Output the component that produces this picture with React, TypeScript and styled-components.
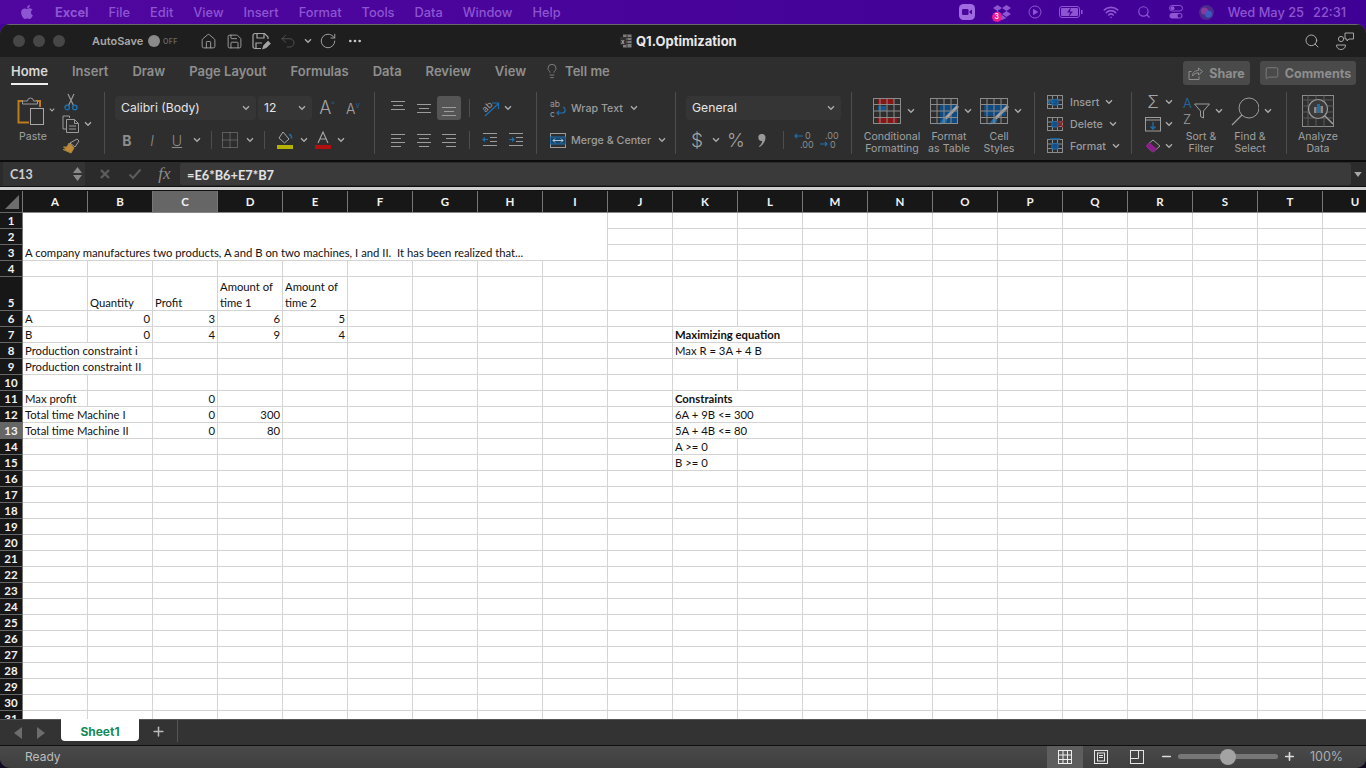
import React from "react"
import styled, { createGlobalStyle } from "styled-components"
import { FaApple } from "react-icons/fa"
import { House, Save, Undo2, RotateCw, Ellipsis, Search, Lightbulb, MessageSquare, Wifi, Plus, Minus } from "lucide-react"

const GlobalStyle = createGlobalStyle`
  html, body { margin: 0; padding: 0; height: 100%; overflow: hidden; }
  body { font-family: Inter, "Liberation Sans", sans-serif; background: #120a22; }
`

const UI_GRAY = "#a2a2a2"
const BLUE = "#1f6fae"

const Screen = styled.div`
  width: 1366px;
  height: 768px;
  display: flex;
  flex-direction: column;
  overflow: hidden;
  background: linear-gradient(#44009a 0, #44009a 50px, #120a22 51px);
`

// mac menu bar
const MenuBar = styled.div`
  height: 24px;
  flex: none;
  display: flex;
  align-items: center;
  padding: 0 20px 0 19px;
  background: linear-gradient(90deg, #50079f, #3f0095);
  color: #8d55d2;
  font-size: 12.8px;
  font-weight: 500;
`

const MenuLeft = styled.div`
  display: flex;
  align-items: center;
  gap: 20px;
`

const AppName = styled.span`
  font-weight: 700;
`

const MenuRight = styled.div`
  display: flex;
  align-items: center;
  margin-left: auto;
`

const TraySlot = styled.div<{ $w: number }>`
  width: ${p => p.$w}px;
  display: flex;
  justify-content: center;
  align-items: center;
  position: relative;
`

const Badge = styled.span`
  position: absolute;
  left: 9px;
  top: 7px;
  width: 10px;
  height: 10px;
  border-radius: 50%;
  background: #ec1a94;
  color: #fff;
  font-size: 7px;
  line-height: 10px;
  text-align: center;
`

const Clock = styled.span`
  margin-left: 7px;
  display: flex;
  gap: 9px;
`

// excel window
const Window = styled.div`
  flex: 1;
  min-height: 0;
  display: flex;
  flex-direction: column;
  border-radius: 10px;
  overflow: hidden;
  background: #2e2e2e;
  box-shadow: inset 0 1px 0 #6a6a6a;
`

const TitleBar = styled.div`
  height: 32px;
  margin-top: 1px;
  flex: none;
  display: flex;
  align-items: center;
  background: #1e1e1e;
  color: ${UI_GRAY};
`

const TitleLeft = styled.div`
  width: 620px;
  padding-left: 13px;
  box-sizing: border-box;
  display: flex;
  align-items: center;
`

const Lights = styled.div`
  display: flex;
  gap: 8px;
  margin-right: 27px;
`

const Light = styled.span`
  width: 12px;
  height: 12px;
  border-radius: 50%;
  background: #474747;
`

const AutoSave = styled.span`
  font-size: 11px;
  font-weight: 600;
  width: 56px;
  color: #a8a8a8;
`

const Toggle = styled.div`
  width: 32px;
  height: 14px;
  margin-right: 15px;
  display: flex;
  align-items: center;
  gap: 3px;
  font-size: 7px;
  font-weight: 600;
  color: #666;
  letter-spacing: 0.4px;
`

const Knob = styled.span`
  width: 12px;
  height: 12px;
  border-radius: 50%;
  background: #8a8a8a;
`

const Slot = styled.div<{ $w: number; $active?: boolean }>`
  width: ${p => p.$w}px;
  height: 24px;
  flex: none;
  display: flex;
  align-items: center;
  justify-content: center;
  border-radius: 3px;
  background: ${p => (p.$active ? "#555" : "transparent")};
`

const DocTitle = styled.div`
  display: flex;
  align-items: center;
  gap: 4px;
  font-size: 13px;
  font-weight: 700;
  color: #e8e8e8;
`

const TitleRight = styled.div`
  margin-left: auto;
  display: flex;
  align-items: center;
  gap: 15px;
  padding-right: 11px;
`

const TabsRow = styled.div`
  height: 28px;
  flex: none;
  display: flex;
  align-items: center;
  padding: 0 10px 0 11px;
  gap: 24px;
  font-size: 13px;
  font-weight: 600;
  color: #8f8f8f;
`

const RibbonTab = styled.div<{ $active?: boolean }>`
  height: 28px;
  line-height: 28px;
  box-sizing: border-box;
  color: ${p => (p.$active ? "#d8d8d8" : "#8f8f8f")};
  box-shadow: ${p => (p.$active ? "inset 0 -2px 0 #eee" : "none")};
`

const TellMe = styled.div`
  display: flex;
  align-items: center;
  gap: 5px;
  margin-left: -6px;
`

const TabActions = styled.div`
  margin-left: auto;
  display: flex;
  gap: 10px;
`

const ActionButton = styled.div<{ $w: number }>`
  width: ${p => p.$w}px;
  height: 24px;
  margin-top: 4px;
  display: flex;
  align-items: center;
  justify-content: center;
  gap: 6px;
  background: #4a4a4a;
  border-radius: 3px;
  color: #8e8e8e;
  font-weight: 700;
  font-size: 12.5px;
`

// ribbon
const Ribbon = styled.div`
  height: 75px;
  flex: none;
  display: flex;
  align-items: center;
`

const Group = styled.div<{ $w?: number; $pl?: number }>`
  width: ${p => (p.$w ? `${p.$w}px` : "auto")};
  flex: none;
  box-sizing: border-box;
  height: 75px;
  padding-left: ${p => p.$pl ?? 0}px;
  display: flex;
`

const Divider = styled.div`
  width: 1px;
  height: 62px;
  flex: none;
  background: #4d4d4d;
`

const Stack = styled.div`
  display: flex;
  flex-direction: column;
  gap: 8px;
  padding-top: 11px;
`

const Row = styled.div`
  height: 24px;
  display: flex;
  align-items: center;
`

const Select = styled.div<{ $w: number }>`
  width: ${p => p.$w}px;
  height: 24px;
  box-sizing: border-box;
  margin-right: 2px;
  padding: 0 6px 1px;
  display: flex;
  align-items: center;
  justify-content: space-between;
  background: #353535;
  border-radius: 3px;
  color: #e4e4e4;
  font-size: 12.2px;
`

const MiniSep = styled.div`
  width: 1px;
  height: 18px;
  background: #4d4d4d;
`

const FontLetter = styled.span<{ $italic?: boolean; $under?: boolean; $bold?: boolean }>`
  font-size: 14px;
  font-weight: ${p => (p.$bold ? 700 : 300)};
  font-style: ${p => (p.$italic ? "italic" : "normal")};
  text-decoration: ${p => (p.$under ? "underline" : "none")};
  color: #8d8d8d;
`

const FxLabel = styled.span`
  font-family: "Liberation Serif", serif;
  font-size: 17px;
  font-style: italic;
  color: #8d8d8d;
`

const SansLetter = styled.span<{ $size: number }>`
  font-size: ${p => p.$size}px;
  font-weight: 300;
  color: #a4a4a4;
  line-height: 1;
`

const GrowCaret = styled.sup`
  font-size: 8px;
  color: ${BLUE};
`

const SmallText = styled.span`
  font-size: 10.7px;
  font-weight: 500;
  color: #9c9c9c;
  white-space: nowrap;
`

const TextRow = styled.div`
  height: 24px;
  display: flex;
  align-items: center;
  gap: 3px;
`

const ChevGap = styled.span`
  margin-left: 4px;
  display: flex;
`

const BigButton = styled.div<{ $w: number; $ml?: number }>`
  width: ${p => p.$w}px;
  margin-left: ${p => p.$ml ?? 0}px;
  flex: none;
  padding-top: 11px;
  display: flex;
  flex-direction: column;
  align-items: center;
`

const BigIcon = styled.div`
  height: 30px;
  display: flex;
  align-items: center;
  gap: 5px;
  margin-bottom: 5px;
`

const PasteGlyph = styled(BigIcon)`
  margin-right: 4px;
`

const TableGlyph = styled(BigIcon)`
  padding-left: 4px;
`

const BigLabel = styled.div`
  font-size: 10.6px;
  line-height: 12px;
  text-align: center;
  color: #a0a0a0;
  white-space: pre;
`

const PasteChev = styled.div`
  width: 6px;
  height: 6px;
  margin-top: 22px;
  display: flex;
  justify-content: center;
`

const ThreeRows = styled.div<{ $ml?: number }>`
  padding-top: 6px;
  margin-left: ${p => p.$ml ?? 0}px;
  display: flex;
  flex-direction: column;
`

const ThinRow = styled.div<{ $gap?: number }>`
  height: 22px;
  display: flex;
  align-items: center;
  gap: ${p => p.$gap ?? 6}px;
`

// formula bar
const FormulaBar = styled.div`
  height: 26px;
  flex: none;
  display: flex;
  align-items: center;
  box-sizing: border-box;
  border-top: 2px solid #0c0c0c;
  padding-left: 3px;
  background: #2b2b2b;
`

const NameBox = styled.div`
  width: 82px;
  height: 24px;
  box-sizing: border-box;
  padding: 0 3px 0 7px;
  display: flex;
  align-items: center;
  justify-content: space-between;
  background: #333;
  color: #cfcfcf;
  font-size: 12.5px;
  font-family: Lato, sans-serif;
  font-weight: 700;
`

const Steppers = styled.div`
  display: flex;
  flex-direction: column;
  gap: 2px;
`

const FormulaTools = styled.div`
  width: 95px;
  display: flex;
  align-items: center;
  padding-left: 5px;
  box-sizing: border-box;
`

const FormulaInput = styled.div`
  width: 1171px;
  height: 22px;
  box-sizing: border-box;
  padding: 1px 0 0 7px;
  display: flex;
  align-items: center;
  background: #3a3a3a;
  border-radius: 2px;
  color: #e2e2e2;
  font-size: 12.8px;
  font-weight: 700;
  font-family: Lato, sans-serif;
`

const Expand = styled.div`
  margin-left: 3px;
  display: flex;
`

const GridTopEdge = styled.div`
  height: 5px;
  flex: none;
  box-sizing: border-box;
  border-top: 1px solid #111;
  border-bottom: 1px solid #111;
  background: #cfcfcf;
`

// sheet
const Sheet = styled.div`
  flex: 1;
  min-height: 0;
  overflow: hidden;
  background: #fff;
  font-family: Lato, "Liberation Sans", sans-serif;
  font-size: 11.3px;
  color: #111;
`

const SheetRow = styled.div<{ $h: number }>`
  display: flex;
  height: ${p => p.$h}px;
`

const RowHead = styled.div<{ $selected?: boolean }>`
  width: 23px;
  flex: none;
  box-sizing: border-box;
  display: flex;
  align-items: flex-end;
  justify-content: center;
  padding-bottom: 1px;
  background: ${p => (p.$selected ? "#666" : "#171717")};
  border-right: 1px solid #777;
  border-bottom: 1px solid #666;
  color: #f2f2f2;
  font-size: 11.5px;
  font-weight: 700;
`

const Corner = styled(RowHead)`
  align-items: center;
  padding: 0;
`

const ColHead = styled.div<{ $selected?: boolean }>`
  width: 65px;
  flex: none;
  box-sizing: border-box;
  display: flex;
  align-items: center;
  justify-content: center;
  background: ${p => (p.$selected ? "#666" : "#171717")};
  border-right: 1px solid #777;
  border-bottom: 1px solid #888;
  color: #f2f2f2;
  font-size: 11.5px;
  font-weight: 700;
`

const Cell = styled.div<{ $span: number; $right?: boolean; $bold?: boolean; $open?: boolean }>`
  width: ${p => p.$span * 65}px;
  flex: none;
  box-sizing: border-box;
  padding: 0 2px;
  display: flex;
  align-items: flex-end;
  justify-content: ${p => (p.$right ? "flex-end" : "flex-start")};
  border-right: 1px solid #d4d4d4;
  border-bottom: ${p => (p.$open ? "none" : "1px solid #d4d4d4")};
  font-weight: ${p => (p.$bold ? 700 : 400)};
  line-height: 16px;
  white-space: pre;
`

const CellText = styled.span`
  margin-bottom: -1px;
`

// tabs and status
const TabBar = styled.div`
  height: 27px;
  flex: none;
  box-sizing: border-box;
  display: flex;
  background: #333;
  border-top: 1px solid #555;
  border-bottom: 1px solid #0f0f0f;
`

const TabArrows = styled.div`
  width: 61px;
  padding-left: 14px;
  box-sizing: border-box;
  display: flex;
  align-items: center;
  gap: 15px;
`

const SheetTab = styled.div`
  width: 78px;
  height: 22px;
  margin-top: -1px;
  padding-top: 2px;
  box-sizing: border-box;
  display: flex;
  align-items: center;
  justify-content: center;
  background: #fff;
  border-radius: 0 0 4px 4px;
  color: #148a58;
  font-size: 12px;
  font-weight: 700;
`

const AddTab = styled.div`
  width: 39px;
  height: 22px;
  box-sizing: border-box;
  display: flex;
  align-items: center;
  justify-content: center;
  border-right: 1px solid #555;
  color: #bbb;
`

const StatusBar = styled.div`
  height: 22px;
  box-sizing: border-box;
  flex: none;
  display: flex;
  align-items: center;
  padding: 0 0 1px 25px;
  background: linear-gradient(#4a4a4a, #3f3f3f);
  color: #bcbcbc;
  font-size: 12px;
`

const StatusRight = styled.div`
  margin-left: auto;
  display: flex;
  align-items: center;
`

const ViewButton = styled.div<{ $active?: boolean }>`
  width: 36px;
  height: 22px;
  display: flex;
  align-items: center;
  justify-content: center;
  background: ${p => (p.$active ? "#5e5e5e" : "transparent")};
`

const ZoomTrack = styled.div`
  width: 100px;
  height: 5px;
  margin-right: 3px;
  display: flex;
  align-items: center;
  justify-content: center;
  background: #777;
  border-radius: 3px;
`

const ZoomThumb = styled.span`
  width: 16px;
  height: 16px;
  flex: none;
  border-radius: 50%;
  background: #a3a3a3;
`

const ZoomValue = styled.span`
  width: 56px;
  margin-left: 13px;
  font-size: 12.5px;
  color: #adadad;
`

// icons
const Chev = ({ color = "#a8a8a8" }: { color?: string }) => (
  <svg width="8" height="6" viewBox="0 0 8 6" fill="none">
    <path d="M1 1.2 4 4.3 7 1.2" stroke={color} strokeWidth="1.4" />
  </svg>
)

const Lines = ({ ys, xs }: { ys: number[]; xs: [number, number][] }) => (
  <svg width="16" height="16" viewBox="0 0 16 16" stroke="#9c9c9c" strokeWidth="1">
    {ys.map((y, i) => (
      <line key={i} x1={xs[i][0]} x2={xs[i][1]} y1={y + 0.5} y2={y + 0.5} />
    ))}
  </svg>
)

const wide: [number, number][] = [[1, 15], [3, 13], [1, 15]]

const PasteIcon = () => (
  <svg width="28" height="30" viewBox="0 0 28 30" fill="none">
    <path d="M6 5H1.5V26.5H12" stroke="#bd7d1c" strokeWidth="2" />
    <path d="M19 5h4v6" stroke="#bd7d1c" strokeWidth="2" />
    <path d="M5.5 8V5h5a3 3 0 0 1 6 0h4v3z" fill="#2e2e2e" stroke="#999" />
    <rect x="13.5" y="12.5" width="13" height="16" stroke="#a8a8a8" />
  </svg>
)

const ScissorsIcon = () => (
  <svg width="14" height="18" viewBox="0 0 14 18" fill="none">
    <path d="M4 1 9.5 12.5M10 1 4.5 12.5" stroke="#9a9a9a" strokeWidth="1.2" />
    <circle cx="3.2" cy="14.5" r="2.2" stroke={BLUE} strokeWidth="1.4" />
    <circle cx="10.8" cy="14.5" r="2.2" stroke={BLUE} strokeWidth="1.4" />
  </svg>
)

const CopyIcon = () => (
  <svg width="18" height="18" viewBox="0 0 18 18" fill="none" stroke="#9a9a9a">
    <path d="M7.5 3V1H1v13h3" />
    <path d="M4.5 4.5h8l4 4v9h-12zM12.5 4.5v4h4M7 11h7M7 14h7" />
  </svg>
)

const BrushIcon = () => (
  <svg width="18" height="16" viewBox="0 0 18 16" fill="none">
    <path d="M7 5 12 10 9 15 1 11.5 4 11 1.5 9 5 9z" fill="#c08a35" stroke="#a8823f" />
    <path d="M8 5 15 1l2 2-4 6z" stroke="#a0a0a0" />
  </svg>
)

const BordersIcon = () => (
  <svg width="16" height="16" viewBox="0 0 16 16" fill="none" stroke="#8d8d8d" strokeDasharray="1 1">
    <rect x="0.5" y="0.5" width="15" height="15" />
    <path d="M8 0.5v15M0.5 8h15" />
  </svg>
)

const FillIcon = () => (
  <svg width="18" height="18" viewBox="0 0 18 18" fill="none">
    <path d="M7 1 13 8 8.5 12 3 7z" stroke="#a8a8a8" />
    <path d="M13 3.5c1.5 0 2.5 1.5 2.5 4" stroke={BLUE} strokeWidth="1.6" />
    <rect x="1" y="14" width="16" height="4" fill="#b5b100" />
  </svg>
)

const FontColorIcon = () => (
  <svg width="18" height="18" viewBox="0 0 18 18" fill="none">
    <path d="M4 12 9 1l5 11M6 8h6" stroke="#a8a8a8" strokeWidth="1.1" />
    <rect x="1" y="14" width="16" height="4" fill="#b01010" />
  </svg>
)

const OrientIcon = () => (
  <svg width="22" height="22" viewBox="0 0 22 22" fill="none">
    <text x="3" y="13" fontSize="9" fill="#9c9c9c" transform="rotate(-45 8 10)">ab</text>
    <path d="M6 19 19 7M13 6h6.5v6" stroke={BLUE} strokeWidth="1.2" />
  </svg>
)

const IndentIcon = ({ flip }: { flip?: boolean }) => (
  <svg width="16" height="14" viewBox="0 0 16 14" fill="none">
    <path d="M1 .5h14M8 4.5h7M8 8.5h7M1 12.5h14" stroke="#9c9c9c" />
    <path d={flip ? "M1 6.5h5M4 4.5l2 2-2 2" : "M6 6.5H1M3 4.5l-2 2 2 2"} stroke={BLUE} strokeWidth="1.2" />
  </svg>
)

const WrapIcon = () => (
  <svg width="16" height="22" viewBox="0 0 16 22" fill="none">
    <text x="0" y="9.5" fontSize="8.5" fill="#9c9c9c">ab</text>
    <text x="0" y="20" fontSize="8.5" fill="#9c9c9c">c</text>
    <path d="M13 10c3 1 3 6-1 6H7M9 14l-2 2 2 2" stroke={BLUE} strokeWidth="1.2" />
  </svg>
)

const MergeIcon = () => (
  <svg width="16" height="15" viewBox="0 0 16 15" fill="none">
    <rect x=".5" y=".5" width="15" height="14" stroke="#9c9c9c" />
    <rect x=".5" y="4" width="15" height="7" fill="#17456b" stroke={BLUE} />
    <path d="M3 7.5h10M5 5.5l-2 2 2 2M11 5.5l2 2-2 2" stroke="#b8c8d6" />
  </svg>
)

const CommaIcon = () => (
  <svg width="8" height="13" viewBox="0 0 8 13">
    <path d="M3.5 0a3.5 3.5 0 0 1 4 3.5C7.5 8 4.5 11 1.5 13L1 12.2C3 10.5 4 9 4.2 7A3.5 3.5 0 0 1 3.5 0z" fill="#9a9a9a" />
  </svg>
)

const DecimalIcon = ({ more }: { more?: boolean }) => (
  <svg width="20" height="18" viewBox="0 0 20 18" fill="none">
    <text x={more ? 6 : 11} y="8" fontSize="9" fill="#8d8d8d">{more ? ".00" : "0"}</text>
    <text x={more ? 11 : 6} y="17" fontSize="9" fill="#8d8d8d">{more ? "0" : ".00"}</text>
    <path d={more ? "M1 13h7M6 11l2 2-2 2" : "M9 5H1M3 3 1 5l2 2"} stroke={BLUE} strokeWidth="1.2" />
  </svg>
)

const TableBase = ({ children }: { children: React.ReactNode }) => (
  <svg width="29" height="27" viewBox="0 0 29 27" fill="none">
    {children}
    <g stroke="#8b8b8b">
      <rect x=".5" y=".5" width="27" height="25" />
      <path d="M7 .5v25M14 .5v25M21 .5v25M.5 6.5h27M.5 13h27M.5 19.5h27" />
    </g>
  </svg>
)

const CondIcon = () => (
  <TableBase>
    <rect x="5" y="1" width="16" height="6" fill="#8a1515" />
    <rect x="5" y="8" width="8" height="5" fill="#17558c" />
    <rect x="5" y="19" width="19" height="6" fill="#8a1515" />
  </TableBase>
)

const BrushOver = () => (
  <>
    <path d="M28 8 15 21" stroke="#a5a5a5" strokeWidth="3" />
    <path d="M15 20c-4 0-3 6-8 6 5 1 10 0 10-4z" fill={BLUE} />
  </>
)

const FormatTableIcon = () => (
  <TableBase>
    <rect x="10" y="7" width="18" height="18" fill="#0f4a80" />
    <BrushOver />
  </TableBase>
)

const CellStylesIcon = () => (
  <TableBase>
    <rect x="4" y="6" width="22" height="12" fill="#0f4a80" />
    <BrushOver />
  </TableBase>
)

const CellOpIcon = ({ kind }: { kind: "insert" | "delete" | "format" }) => (
  <svg width="17" height="16" viewBox="0 0 17 16" fill="none">
    <rect x=".5" y="1.5" width="15" height="13" stroke="#8b8b8b" />
    <path d="M.5 6h15M.5 10.5h15M5.5 1.5v13M10.5 1.5v13" stroke="#8b8b8b" />
    <rect x="5" y="5.5" width="6" height="5.5" fill="#164f85" stroke={BLUE} />
    {kind === "insert" && <path d="M8 8H1M3 6 1 8l2 2" stroke={BLUE} strokeWidth="1.2" />}
    {kind === "delete" && <path d="M11 5l5 6M16 5l-5 6" stroke="#a81e1e" strokeWidth="1.4" />}
    {kind === "format" && <path d="M3 1h10" stroke={BLUE} strokeWidth="1.4" />}
  </svg>
)

const FillDownIcon = () => (
  <svg width="17" height="15" viewBox="0 0 17 15" fill="none">
    <rect x=".5" y=".5" width="15" height="13.5" stroke="#9c9c9c" />
    <path d="M.5 3h15" stroke="#9c9c9c" />
    <path d="M8 5v7M5.5 9.5 8 12l2.5-2.5" stroke={BLUE} strokeWidth="1.3" />
  </svg>
)

const EraserIcon = () => (
  <svg width="16" height="14" viewBox="0 0 16 14" fill="none">
    <path d="M8 1 15 7 8 13 1 7z" stroke="#a0a0a0" />
    <path d="M4.5 4 11.5 10 8 13 1 7z" fill="#8b1f8b" stroke="#8b1f8b" />
  </svg>
)

const SortIcon = () => (
  <svg width="30" height="32" viewBox="0 0 30 32" fill="none">
    <text x="3" y="13" fontSize="13" fontWeight="300" fill={BLUE}>A</text>
    <text x="3" y="28.5" fontSize="13" fontWeight="300" fill="#9c9c9c">Z</text>
    <path d="M14.5 9h15l-6 7v7l-3-1.5V16z" stroke="#9c9c9c" />
  </svg>
)

const LensIcon = () => (
  <svg width="31" height="29" viewBox="0 0 31 29" fill="none" stroke="#9c9c9c">
    <circle cx="21" cy="11" r="10" />
    <path d="M14 18 4 28" strokeWidth="1.2" />
  </svg>
)

const AnalyzeIcon = () => (
  <svg width="33" height="32" viewBox="0 0 33 32" fill="none">
    <rect x=".5" y=".5" width="31" height="31" stroke="#8b8b8b" />
    <path d="M.5 5h31M.5 11h31M.5 17h31M.5 23h31M6 .5v31M14 .5v31M22 .5v31" stroke="#5a5a5a" />
    <circle cx="16" cy="14" r="9.5" fill="#3a3a3a" stroke="#9c9c9c" strokeWidth="1.2" />
    <rect x="12" y="12" width="2.5" height="6" fill="#8b8b8b" />
    <rect x="15" y="9" width="3" height="9" fill={BLUE} />
    <rect x="18.5" y="11" width="2.5" height="7" fill="#8b8b8b" />
    <path d="M23 21 31 29" stroke="#9c9c9c" strokeWidth="1.4" />
  </svg>
)

const SaveEditIcon = () => (
  <svg width="19" height="18" viewBox="0 0 19 18" fill="none" stroke="#a5a5a5" strokeWidth="1.2">
    <path d="M9 16.5H3a2 2 0 0 1-2-2v-11a2 2 0 0 1 2-2h9.5L16 5v2" />
    <path d="M5 1.5V6h7V1.5M4 16v-5h6" />
    <path d="M11 16.5l1-3 4-4 2 2-4 4z" fill="#a5a5a5" />
  </svg>
)

const PeopleIcon = () => (
  <svg width="20" height="20" viewBox="0 0 20 20" fill="none" stroke="#a5a5a5">
    <circle cx="6" cy="8" r="2.6" />
    <path d="M1.5 14h9c0 3-2 4.5-4.5 4.5S1.5 17 1.5 14z" />
    <path d="M10 2h8.5v6H14l-2 2V8h-2z" />
  </svg>
)

const ExcelDocIcon = () => (
  <svg width="12" height="14" viewBox="0 0 12 14" fill="none">
    <rect x="3" y=".5" width="8.5" height="13" fill="#7d7d7d" />
    <path d="M3 3.5h8.500M3 6.5h8.500M3 9.5h8.500M7 .5v13" stroke="#333" />
    <rect x="0" y="3" width="6" height="8" fill="#303030" />
    <text x="1" y="9.5" fontSize="6" fill="#aaa">x</text>
  </svg>
)

const ShareIcon = () => (
  <svg width="15" height="14" viewBox="0 0 15 14" fill="none" stroke="#8e8e8e">
    <path d="M3.5 5.5H1v8h10v-3" />
    <path d="M4.5 10c0-4 3-5.5 6-5.5V2L14.5 5.5 10.5 9V6.800C8 6.800 6 8 4.5 10z" />
  </svg>
)

const ZoomAppIcon = () => (
  <svg width="16" height="16" viewBox="0 0 16 16">
    <rect width="16" height="16" rx="4.5" fill="#a06be0" />
    <rect x="3" y="5" width="6.5" height="6" rx="1.2" fill="#4a0699" />
    <path d="M10.5 7.3 13 5.5v5l-2.5-1.8z" fill="#4a0699" />
  </svg>
)

const DropboxIcon = () => (
  <svg width="18" height="15" viewBox="0 0 18 15" fill="#8d55d2">
    <path d="M4.5 0 9 3 4.5 6 0 3zM13.5 0 18 3l-4.5 3L9 3zM0 9l4.5-3L9 9l-4.500 3zM13.5 6 18 9l-4.5 3L9 9zM4.5 13l4.5-3 4.5 3L9 15z" />
  </svg>
)

const PlayIcon = () => (
  <svg width="14" height="14" viewBox="0 0 14 14" fill="none" stroke="#8d55d2">
    <circle cx="7" cy="7" r="6" />
    <path d="M5.5 4.5 9.5 7l-4 2.5z" fill="#8d55d2" />
  </svg>
)

const BatteryIcon = () => (
  <svg width="24" height="12" viewBox="0 0 24 12" fill="none">
    <rect x=".5" y=".5" width="20" height="11" rx="2.5" stroke="#8d55d2" />
    <rect x="2" y="2" width="17" height="8" rx="1" fill="#8d55d2" />
    <path d="M12 1 8 6.5h3L9.5 11 14 5.5h-3z" fill="#4a0699" />
    <rect x="22" y="4" width="1.5" height="4" fill="#8d55d2" />
  </svg>
)

const ControlIcon = () => (
  <svg width="14" height="14" viewBox="0 0 14 14" fill="none">
    <rect x=".5" y=".5" width="13" height="5.5" rx="2.7" stroke="#8d55d2" />
    <rect x=".5" y="8" width="13" height="5.5" rx="2.7" fill="#8d55d2" />
    <circle cx="3.5" cy="3.2" r="2" fill="#8d55d2" />
    <circle cx="10.5" cy="10.7" r="2" fill="#4a0699" />
  </svg>
)

const SiriIcon = () => (
  <svg width="15" height="15" viewBox="0 0 15 15">
    <circle cx="7.5" cy="7.5" r="7.5" fill="#4a2a8c" />
    <circle cx="5.5" cy="6" r="3.5" fill="#8b3a9c" />
    <circle cx="9.5" cy="9" r="3.5" fill="#3a5cc0" />
  </svg>
)

const Triangle = ({ up, size = 7, color = "#8a8a8a" }: { up?: boolean; size?: number; color?: string }) => (
  <svg width={size + 2} height={size - 1} viewBox="0 0 9 6">
    <path d={up ? "M4.5 0 9 6H0z" : "M0 0h9L4.5 6z"} fill={color} />
  </svg>
)

const SideArrow = ({ right }: { right?: boolean }) => (
  <svg width="8" height="12" viewBox="0 0 8 12">
    <path d={right ? "M0 0 8 6 0 12z" : "M8 0 0 6 8 12z"} fill="#6d6d6d" />
  </svg>
)

const GridViewIcon = () => (
  <svg width="14" height="14" viewBox="0 0 14 14" fill="none" stroke="#eee">
    <rect x=".5" y=".5" width="13" height="13" />
    <path d="M5 .5v13M9.5 .5v13M.5 5h13M.5 9.5h13" />
  </svg>
)

const PageViewIcon = () => (
  <svg width="14" height="14" viewBox="0 0 14 14" fill="none" stroke="#e4e4e4">
    <rect x=".5" y=".5" width="13" height="13" />
    <rect x="3.5" y="3" width="7" height="8" />
    <path d="M5 5.5h4M5 7.5h4" />
  </svg>
)

const BreakViewIcon = () => (
  <svg width="14" height="14" viewBox="0 0 14 14" fill="none" stroke="#e4e4e4">
    <rect x=".5" y=".5" width="13" height="13" />
    <path d="M.5 8.5h8V.5" />
  </svg>
)

// sheet data
const COLUMNS = "ABCDEFGHIJKLMNOPQRSTU".split("")
const ROW_COUNT = 31

type CellSpec = { c: number; t?: string; span?: number; right?: boolean; bold?: boolean; open?: boolean }

const num = (c: number, t: string): CellSpec => ({ c, t, right: true })

const SHEET: Record<number, CellSpec[]> = {
  1: [{ c: 0, span: 9, open: true }],
  2: [{ c: 0, span: 9, open: true }],
  3: [{ c: 0, span: 9, t: "A company manufactures two products, A and B on two machines, I and II.  It has been realized that..." }],
  5: [
    { c: 1, t: "Quantity" },
    { c: 2, t: "Profit" },
    { c: 3, t: "Amount of\ntime 1" },
    { c: 4, t: "Amount of\ntime 2" },
  ],
  6: [{ c: 0, t: "A" }, num(1, "0"), num(2, "3"), num(3, "6"), num(4, "5")],
  7: [{ c: 0, t: "B" }, num(1, "0"), num(2, "4"), num(3, "9"), num(4, "4"), { c: 10, span: 2, t: "Maximizing equation", bold: true }],
  8: [{ c: 0, span: 2, t: "Production constraint i" }, { c: 10, span: 2, t: "Max R = 3A + 4 B" }],
  9: [{ c: 0, span: 2, t: "Production constraint II" }],
  11: [{ c: 0, t: "Max profit" }, num(2, "0"), { c: 10, span: 2, t: "Constraints", bold: true }],
  12: [{ c: 0, span: 2, t: "Total time Machine I" }, num(2, "0"), num(3, "300"), { c: 10, span: 2, t: "6A + 9B <= 300" }],
  13: [{ c: 0, span: 2, t: "Total time Machine II" }, num(2, "0"), num(3, "80"), { c: 10, span: 2, t: "5A + 4B <= 80" }],
  14: [{ c: 10, t: "A >= 0" }],
  15: [{ c: 10, t: "B >= 0" }],
}

const renderCells = (row: number) => {
  const specs = SHEET[row] ?? []
  const out: React.ReactNode[] = []
  let c = 0
  while (c < COLUMNS.length) {
    const spec = specs.find(s => s.c === c)
    const span = spec?.span ?? 1
    out.push(
      <Cell key={c} $span={span} $right={spec?.right} $bold={spec?.bold} $open={spec?.open}>
        {spec?.t && <CellText>{spec.t}</CellText>}
      </Cell>
    )
    c += span
  }
  return out
}

const App = () => {
  const rows = Array.from({ length: ROW_COUNT }, (_, i) => i + 1)

  return (
    <Screen>
      <GlobalStyle />
      <MenuBar>
        <MenuLeft>
          <FaApple size={16} />
          <AppName>Excel</AppName>
          {["File", "Edit", "View", "Insert", "Format", "Tools", "Data", "Window", "Help"].map(m => (
            <span key={m}>{m}</span>
          ))}
        </MenuLeft>
        <MenuRight>
          <TraySlot $w={32}><ZoomAppIcon /></TraySlot>
          <TraySlot $w={38}><DropboxIcon /><Badge>3</Badge></TraySlot>
          <TraySlot $w={28}><PlayIcon /></TraySlot>
          <TraySlot $w={44}><BatteryIcon /></TraySlot>
          <TraySlot $w={36}><Wifi size={16} strokeWidth={2.4} /></TraySlot>
          <TraySlot $w={30}><Search size={14} strokeWidth={2} /></TraySlot>
          <TraySlot $w={34}><ControlIcon /></TraySlot>
          <TraySlot $w={28}><SiriIcon /></TraySlot>
          <Clock><span>Wed May 25</span><span>22:31</span></Clock>
        </MenuRight>
      </MenuBar>

      <Window>
        <TitleBar>
          <TitleLeft>
            <Lights><Light /><Light /><Light /></Lights>
            <AutoSave>AutoSave</AutoSave>
            <Toggle><Knob />OFF</Toggle>
            <Slot $w={26}><House size={17} strokeWidth={1.3} /></Slot>
            <Slot $w={27}><Save size={17} strokeWidth={1.3} /></Slot>
            <Slot $w={26}><SaveEditIcon /></Slot>
            <Slot $w={28}><Undo2 size={18} strokeWidth={1.1} color="#5a5a5a" /></Slot>
            <Slot $w={12}><Chev /></Slot>
            <Slot $w={28}><RotateCw size={18} strokeWidth={1.3} /></Slot>
            <Slot $w={26}><Ellipsis size={16} strokeWidth={2} color="#c8c8c8" /></Slot>
          </TitleLeft>
          <DocTitle><ExcelDocIcon />Q1.Optimization</DocTitle>
          <TitleRight>
            <Search size={16} strokeWidth={1.3} color="#c0c0c0" />
            <PeopleIcon />
          </TitleRight>
        </TitleBar>

        <TabsRow>
          <RibbonTab $active>Home</RibbonTab>
          <RibbonTab>Insert</RibbonTab>
          <RibbonTab>Draw</RibbonTab>
          <RibbonTab>Page Layout</RibbonTab>
          <RibbonTab>Formulas</RibbonTab>
          <RibbonTab>Data</RibbonTab>
          <RibbonTab>Review</RibbonTab>
          <RibbonTab>View</RibbonTab>
          <TellMe><Lightbulb size={16} strokeWidth={1.2} />Tell me</TellMe>
          <TabActions>
            <ActionButton $w={67}><ShareIcon />Share</ActionButton>
            <ActionButton $w={96}><MessageSquare size={14} strokeWidth={1.2} />Comments</ActionButton>
          </TabActions>
        </TabsRow>

        <Ribbon>
          <Group $w={104} $pl={17}>
            <BigButton $w={32}>
              <PasteGlyph><PasteIcon /></PasteGlyph>
              <BigLabel>Paste</BigLabel>
            </BigButton>
            <PasteChev><Chev /></PasteChev>
            <ThreeRows $ml={6}>
              <ThinRow><Slot $w={20}><ScissorsIcon /></Slot></ThinRow>
              <ThinRow $gap={3}><Slot $w={20}><CopyIcon /></Slot><Chev /></ThinRow>
              <ThinRow><Slot $w={20}><BrushIcon /></Slot></ThinRow>
            </ThreeRows>
          </Group>
          <Divider />

          <Group $w={269} $pl={10}>
            <Stack>
              <Row>
                <Select $w={141}>Calibri (Body)<Chev /></Select>
                <Select $w={54}>12<Chev /></Select>
                <Slot $w={26}><SansLetter $size={18}>A<GrowCaret>^</GrowCaret></SansLetter></Slot>
                <Slot $w={26}><SansLetter $size={14}>A<GrowCaret>v</GrowCaret></SansLetter></Slot>
              </Row>
              <Row>
                <Slot $w={24}><FontLetter $bold>B</FontLetter></Slot>
                <Slot $w={26}><FontLetter $italic>I</FontLetter></Slot>
                <Slot $w={24}><FontLetter $under>U</FontLetter></Slot>
                <Slot $w={16}><Chev /></Slot>
                <Slot $w={12}><MiniSep /></Slot>
                <Slot $w={26}><BordersIcon /></Slot>
                <Slot $w={14}><Chev /></Slot>
                <Slot $w={14}><MiniSep /></Slot>
                <Slot $w={28}><FillIcon /></Slot>
                <Slot $w={10}><Chev /></Slot>
                <Slot $w={27}><FontColorIcon /></Slot>
                <Slot $w={10}><Chev /></Slot>
              </Row>
            </Stack>
          </Group>
          <Divider />

          <Group $w={161} $pl={10}>
            <Stack>
              <Row>
                <Slot $w={26}><Lines ys={[1, 5, 9]} xs={wide} /></Slot>
                <Slot $w={26}><Lines ys={[4, 8, 12]} xs={wide} /></Slot>
                <Slot $w={24} $active><Lines ys={[7, 11, 15]} xs={wide} /></Slot>
                <Slot $w={16}><MiniSep /></Slot>
                <Slot $w={26}><OrientIcon /></Slot>
                <Slot $w={10}><Chev /></Slot>
              </Row>
              <Row>
                <Slot $w={26}><Lines ys={[2, 6, 10, 14]} xs={[[1, 15], [1, 11], [1, 15], [1, 11]]} /></Slot>
                <Slot $w={26}><Lines ys={[2, 6, 10, 14]} xs={[[1, 15], [3, 13], [1, 15], [3, 13]]} /></Slot>
                <Slot $w={24}><Lines ys={[2, 6, 10, 14]} xs={[[1, 15], [5, 15], [1, 15], [5, 15]]} /></Slot>
                <Slot $w={16}><MiniSep /></Slot>
                <Slot $w={26}><IndentIcon /></Slot>
                <Slot $w={26}><IndentIcon flip /></Slot>
              </Row>
            </Stack>
          </Group>
          <Divider />

          <Group $w={138} $pl={11}>
            <Stack>
              <TextRow>
                <Slot $w={20}><WrapIcon /></Slot>
                <SmallText>Wrap Text</SmallText>
                <ChevGap><Chev /></ChevGap>
              </TextRow>
              <TextRow>
                <Slot $w={20}><MergeIcon /></Slot>
                <SmallText>Merge &amp; Center</SmallText>
                <ChevGap><Chev /></ChevGap>
              </TextRow>
            </Stack>
          </Group>
          <Divider />

          <Group $w={175} $pl={10}>
            <Stack>
              <Row>
                <Select $w={155}>General<Chev /></Select>
              </Row>
              <Row>
                <Slot $w={22}><SansLetter $size={19}>$</SansLetter></Slot>
                <Slot $w={16}><Chev /></Slot>
                <Slot $w={24}><SansLetter $size={19}>%</SansLetter></Slot>
                <Slot $w={28}><CommaIcon /></Slot>
                <Slot $w={14}><MiniSep /></Slot>
                <Slot $w={28}><DecimalIcon /></Slot>
                <Slot $w={22}><DecimalIcon more /></Slot>
              </Row>
            </Stack>
          </Group>
          <Divider />

          <Group $w={182} $pl={10}>
            <BigButton $w={60}>
              <TableGlyph><CondIcon /><Chev /></TableGlyph>
              <BigLabel>{"Conditional\nFormatting"}</BigLabel>
            </BigButton>
            <BigButton $w={54}>
              <TableGlyph><FormatTableIcon /><Chev /></TableGlyph>
              <BigLabel>{"Format\nas Table"}</BigLabel>
            </BigButton>
            <BigButton $w={46}>
              <TableGlyph><CellStylesIcon /><Chev /></TableGlyph>
              <BigLabel>{"Cell\nStyles"}</BigLabel>
            </BigButton>
          </Group>
          <Divider />

          <Group $w={96} $pl={12}>
            <ThreeRows>
              <ThinRow><CellOpIcon kind="insert" /><SmallText>Insert</SmallText><Chev /></ThinRow>
              <ThinRow><CellOpIcon kind="delete" /><SmallText>Delete</SmallText><Chev /></ThinRow>
              <ThinRow><CellOpIcon kind="format" /><SmallText>Format</SmallText><Chev /></ThinRow>
            </ThreeRows>
          </Group>
          <Divider />

          <Group $w={154} $pl={12}>
            <ThreeRows>
              <ThinRow $gap={3}><Slot $w={18}><SansLetter $size={17}>Σ</SansLetter></Slot><Chev /></ThinRow>
              <ThinRow $gap={3}><Slot $w={18}><FillDownIcon /></Slot><Chev /></ThinRow>
              <ThinRow $gap={3}><Slot $w={18}><EraserIcon /></Slot><Chev /></ThinRow>
            </ThreeRows>
            <BigButton $w={48} $ml={4}>
              <BigIcon><SortIcon /><Chev /></BigIcon>
              <BigLabel>{"Sort &\nFilter"}</BigLabel>
            </BigButton>
            <BigButton $w={50}>
              <BigIcon><LensIcon /><Chev /></BigIcon>
              <BigLabel>{"Find &\nSelect"}</BigLabel>
            </BigButton>
          </Group>
          <Divider />

          <Group>
            <BigButton $w={62}>
              <BigIcon><AnalyzeIcon /></BigIcon>
              <BigLabel>{"Analyze\nData"}</BigLabel>
            </BigButton>
          </Group>
        </Ribbon>

        <FormulaBar>
          <NameBox>
            C13
            <Steppers><Triangle up /><Triangle /></Steppers>
          </NameBox>
          <FormulaTools>
            <Slot $w={30}><svg width="12" height="12" viewBox="0 0 12 12"><path d="M2 2l8 8M10 2l-8 8" stroke="#5c5c5c" strokeWidth="2.4" /></svg></Slot>
            <Slot $w={29}><svg width="14" height="12" viewBox="0 0 14 12" fill="none"><path d="M1.5 6.5 5 10l7.5-8.5" stroke="#5c5c5c" strokeWidth="2" /></svg></Slot>
            <Slot $w={31}><FxLabel>fx</FxLabel></Slot>
          </FormulaTools>
          <FormulaInput>=E6*B6+E7*B7</FormulaInput>
          <Expand><Triangle size={6} color="#a8a8a8" /></Expand>
        </FormulaBar>
        <GridTopEdge />

        <Sheet>
          <SheetRow $h={22}>
            <Corner>
              <svg width="16" height="16" viewBox="0 0 16 16"><path d="M16 1v14H2z" fill="#6d6d6d" /></svg>
            </Corner>
            {COLUMNS.map(c => (
              <ColHead key={c} $selected={c === "C"}>{c}</ColHead>
            ))}
          </SheetRow>
          {rows.map(r => (
            <SheetRow key={r} $h={r === 5 ? 34 : 16}>
              <RowHead $selected={r === 13}>{r}</RowHead>
              {renderCells(r)}
            </SheetRow>
          ))}
        </Sheet>

        <TabBar>
          <TabArrows><SideArrow /><SideArrow right /></TabArrows>
          <SheetTab>Sheet1</SheetTab>
          <AddTab><Plus size={15} strokeWidth={2.4} /></AddTab>
        </TabBar>

        <StatusBar>
          Ready
          <StatusRight>
            <ViewButton $active><GridViewIcon /></ViewButton>
            <ViewButton><PageViewIcon /></ViewButton>
            <ViewButton><BreakViewIcon /></ViewButton>
            <Slot $w={23}><Minus size={13} strokeWidth={3} color="#ddd" /></Slot>
            <ZoomTrack><ZoomThumb /></ZoomTrack>
            <Slot $w={16}><Plus size={13} strokeWidth={3} color="#ddd" /></Slot>
            <ZoomValue>100%</ZoomValue>
          </StatusRight>
        </StatusBar>
      </Window>
    </Screen>
  )
}

export default App
